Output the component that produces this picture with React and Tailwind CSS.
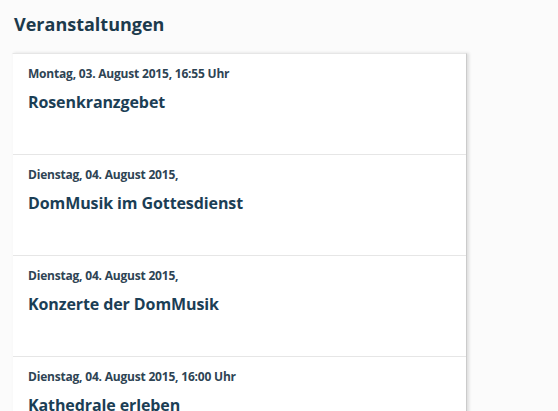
import React from 'react';

const events = [
  { date: 'Montag, 03. August 2015, 16:55 Uhr', title: 'Rosenkranzgebet' },
  { date: 'Dienstag, 04. August 2015,', title: 'DomMusik im Gottesdienst' },
  { date: 'Dienstag, 04. August 2015,', title: 'Konzerte der DomMusik' },
  { date: 'Dienstag, 04. August 2015, 16:00 Uhr', title: 'Kathedrale erleben' },
];

const App = () => {
  return (
    <div
      className="h-[411px] w-[558px] overflow-hidden bg-[#fbfbfb]"
      style={{ fontFamily: '"Open Sans", "Noto Sans", sans-serif' }}
    >
      <h2 className="pl-[14px] pt-[12px] text-[18px] font-bold leading-[24px] text-[#1c3a4c]">
        Veranstaltungen
      </h2>
      {/* event list card */}
      <div className="ml-[12px] mt-[17px] w-[455px] border border-[#e6e6e6] border-l-[#f9f9f9] border-r-[#cbcbcb] bg-white shadow-[2px_0_3px_rgba(0,0,0,0.12)]">
        {events.map((ev, i) => (
          <div
            key={i}
            className="h-[101px] border-b border-[#e6e6e6] pl-[15px] pt-[13px]"
          >
            <div className="text-[12px] font-bold leading-[14px] tracking-[-0.2px] text-[#2e4454]">{ev.date}</div>
            <div className="mt-[11px] text-[16px] font-bold leading-[21px] tracking-[-0.1px] text-[#1b3e55]">{ev.title}</div>
          </div>
        ))}
      </div>
    </div>
  );
};

export default App;
